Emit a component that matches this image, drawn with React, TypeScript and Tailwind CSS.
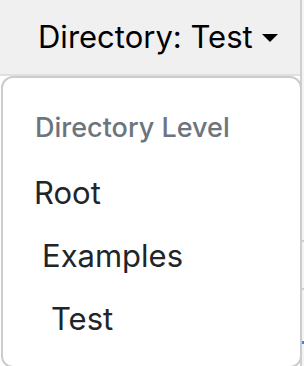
export default function App() {
  const items = [
    { label: "Root", indent: "pl-[31px]" },
    { label: "Examples", indent: "pl-[39px]" },
    { label: "Test", indent: "pl-[48px]" },
  ];

  return (
    <div className="relative w-[304px] h-[366px] overflow-hidden bg-white font-['Inter',sans-serif] text-[#212529] flex">
      {/* Navbar + page */}
      <div className="w-[302px] h-full border-r-2 border-[#cfcfcf]">
        <div className="h-[76px] bg-[#f0f0f0] border-b-2 border-[#e0e0e0]">
          <button className="flex items-center gap-[9px] pl-[38px] pt-[15px] text-[31px] leading-[44px] text-black">
            <span>Directory: Test</span>
            <span className="w-0 h-0 border-l-[8px] border-r-[8px] border-t-[8px] border-l-transparent border-r-transparent border-t-black mt-[2px]" />
          </button>
        </div>
      </div>

      {/* Background content to the right */}
      <div className="w-[2px] h-full bg-[#f4f4f4] flex flex-col pt-[240px] gap-[46px]">
        <div className="h-[2px] bg-[#d0d0d0]" />
        <div className="h-[2px] bg-[#d0d0d0]" />
        <div className="h-[3px] bg-[#3b82f6] mt-[5px]" />
      </div>

      {/* Dropdown menu */}
      <div className="absolute left-[1px] top-[76px] w-[301px] bg-white border-2 border-[#cccccc] rounded-[12px] py-[16px]">
        <div className="pl-[32px] pt-[13px] pb-[12px] text-[27px] leading-[42px] font-medium text-[#6c757d]">
          Directory Level
        </div>
        {items.map((item) => (
          <div key={item.label} className={`${item.indent} py-[8px] text-[31px] leading-[47px]`}>
            {item.label}
          </div>
        ))}
      </div>
    </div>
  );
}
